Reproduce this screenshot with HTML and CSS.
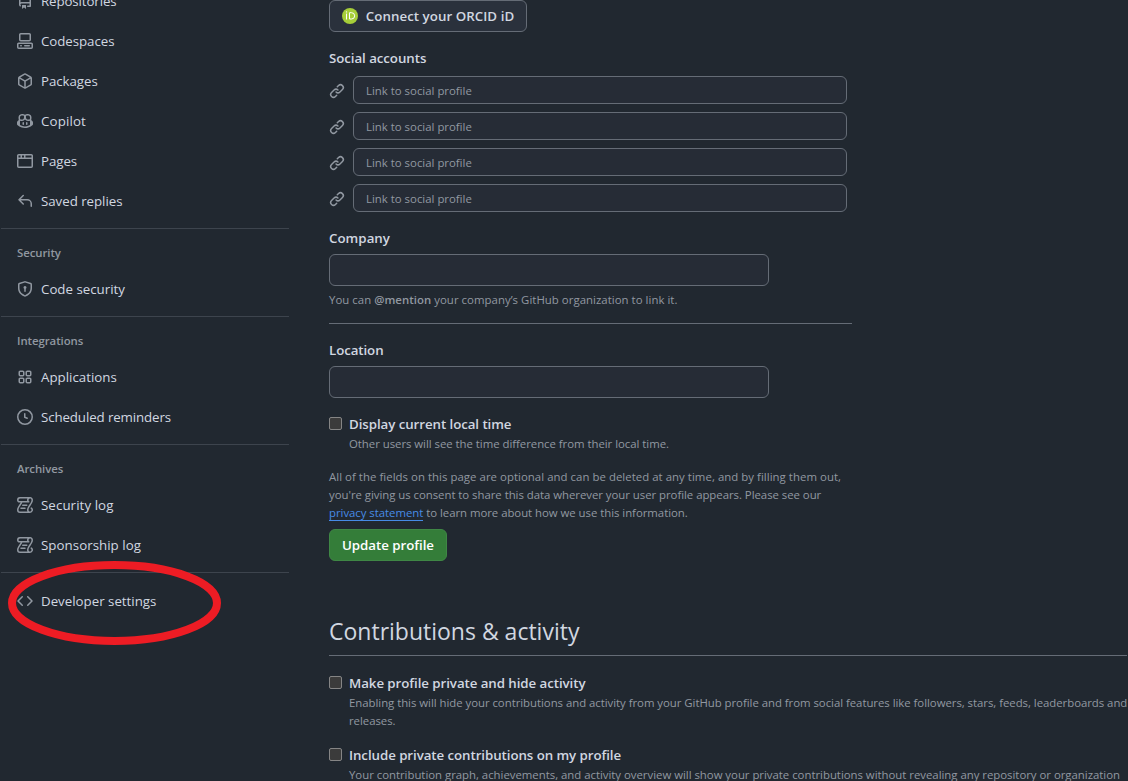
FILE: index.html
```html
<!DOCTYPE html>
<html lang="en">
<head>
<meta charset="utf-8">
<title>Your profile</title>
<link rel="stylesheet" href="styles.css">
</head>
<body>
<svg class="sprite" aria-hidden="true">
  <symbol id="log" viewBox="0 0 16 16"><path d="M5 8.25a.75.75 0 0 1 .75-.75h4a.75.75 0 0 1 0 1.5h-4A.75.75 0 0 1 5 8.25ZM4 10.5A.75.75 0 0 0 4 12h4a.75.75 0 0 0 0-1.5H4Z"/><path d="M13-.005c1.654 0 3 1.328 3 3 0 .982-.338 1.933-.783 2.818-.443.879-1.028 1.758-1.582 2.588l-.011.017c-.568.853-1.104 1.659-1.501 2.446-.398.789-.623 1.494-.623 2.136a1.500 1.500 0 1 0 2.333-1.248.75.75 0 0 1 .834-1.246A3 3 0 0 1 13 16H3a3 3 0 0 1-3-3c0-1.582.891-3.135 1.777-4.506.209-.322.418-.637.623-.946.473-.709.923-1.386 1.287-2.048H2.510c-.576 0-1.381-.133-1.907-.783A2.680 2.680 0 0 1 0 2.995a3 3 0 0 1 3-3Zm0 1.500a1.500 1.500 0 0 0-1.500 1.500c0 .476.223.834.667 1.132A.75.75 0 0 1 11.750 5.500H5.368c-.467 1.003-1.141 2.015-1.773 2.963-.192.289-.381.571-.558.845C2.130 10.711 1.500 11.916 1.500 13A1.500 1.500 0 0 0 3 14.500h7.401A2.989 2.989 0 0 1 10 13c0-.979.338-1.928.784-2.812.441-.874 1.023-1.748 1.575-2.576l.017-.026c.568-.853 1.103-1.658 1.501-2.448.398-.79.623-1.497.623-2.143 0-.838-.669-1.500-1.500-1.500Zm-10 0a1.500 1.500 0 0 0-1.500 1.500c0 .321.100.569.270.778.097.120.325.227.740.227h7.674A2.737 2.737 0 0 1 10 2.995c0-.546.146-1.059.401-1.500Z"/></symbol>
  <symbol id="link" viewBox="0 0 16 16"><path d="m7.775 3.275 1.250-1.250a3.500 3.500 0 1 1 4.950 4.950l-2.500 2.500a3.500 3.500 0 0 1-4.950 0 .751.751 0 0 1 .018-1.042.751.751 0 0 1 1.042-.018 1.998 1.998 0 0 0 2.830 0l2.500-2.500a2.002 2.002 0 0 0-2.830-2.830l-1.250 1.250a.751.751 0 0 1-1.042-.018.751.751 0 0 1-.018-1.042Zm-4.690 9.640a1.998 1.998 0 0 0 2.830 0l1.250-1.250a.751.751 0 0 1 1.042.018.751.751 0 0 1 .018 1.042l-1.250 1.250a3.500 3.500 0 1 1-4.950-4.950l2.500-2.500a3.500 3.500 0 0 1 4.950 0 .751.751 0 0 1-.018 1.042.751.751 0 0 1-1.042.018 1.998 1.998 0 0 0-2.830 0l-2.500 2.500a1.998 1.998 0 0 0 0 2.830Z"/></symbol>
</svg>
<div class="page">
  <nav class="sidebar">
    <ul class="nav-group">
      <li class="nav-item"><svg class="icon" viewBox="0 0 16 16"><path d="M2 2.500A2.500 2.500 0 0 1 4.500 0h8.750a.75.75 0 0 1 .75.75v12.500a.75.75 0 0 1-.75.75h-2.500a.75.75 0 0 1 0-1.500h1.750v-2h-8a1 1 0 0 0-.714 1.700.75.75 0 1 1-1.072 1.050A2.495 2.495 0 0 1 2 11.500Zm10.500-1h-8a1 1 0 0 0-1 1v6.708A2.486 2.486 0 0 1 4.500 9h8ZM5 12.250a.250.250 0 0 1 .250-.250h3.500a.250.250 0 0 1 .250.250v3.250a.250.250 0 0 1-.400.200l-1.450-1.087a.249.249 0 0 0-.300 0L5.400 15.700a.250.250 0 0 1-.400-.200Z"/></svg><span class="w-repos">Repositories</span></li>
      <li class="nav-item"><svg class="icon" viewBox="0 0 16 16"><path d="M0 11.250c0-.966.784-1.750 1.750-1.750h12.500c.966 0 1.750.784 1.750 1.750v3A1.750 1.750 0 0 1 14.250 16H1.750A1.750 1.750 0 0 1 0 14.250Zm2-9.500C2 .784 2.784 0 3.750 0h8.500C13.216 0 14 .784 14 1.750v5a1.750 1.750 0 0 1-1.750 1.750h-8.500A1.750 1.750 0 0 1 2 6.750Zm1.750-.250a.250.250 0 0 0-.250.250v5c0 .138.112.250.250.250h8.500a.250.250 0 0 0 .250-.250v-5a.250.250 0 0 0-.250-.250Zm-2 9.500a.250.250 0 0 0-.250.250v3c0 .138.112.250.250.250h12.500a.250.250 0 0 0 .250-.250v-3a.250.250 0 0 0-.250-.250Z"/><path d="M7 12.750a.75.75 0 0 1 .75-.75h4.500a.75.75 0 0 1 0 1.500h-4.500a.75.75 0 0 1-.75-.75Zm-4 0a.75.75 0 0 1 .75-.75h.500a.75.75 0 0 1 0 1.500h-.500a.75.75 0 0 1-.75-.75Z"/></svg><span class="w-snug">Codespaces</span></li>
      <li class="nav-item"><svg class="icon" viewBox="0 0 16 16"><path d="m8.878.392 5.250 3.045c.540.314.872.890.872 1.514v6.098a1.750 1.750 0 0 1-.872 1.514l-5.250 3.045a1.750 1.750 0 0 1-1.756 0l-5.250-3.045A1.750 1.750 0 0 1 1 11.049V4.951c0-.624.332-1.201.872-1.514L7.122.392a1.750 1.750 0 0 1 1.756 0ZM7.875 1.690l-4.630 2.685L8 7.133l4.755-2.758-4.630-2.685a.248.248 0 0 0-.250 0ZM2.500 5.677v5.372c0 .090.047.171.125.216l4.625 2.683V8.432Zm6.250 8.271 4.625-2.683a.250.250 0 0 0 .125-.216V5.677L8.750 8.432Z"/></svg><span class="w-snug">Packages</span></li>
      <li class="nav-item"><svg class="icon" viewBox="0 0 16 16"><path d="M7.998 15.035c-4.562 0-7.873-2.914-7.998-3.749V9.338c.085-.628.677-1.686 1.588-2.065.013-.070.024-.143.036-.218.029-.183.060-.384.126-.612-.201-.508-.254-1.084-.254-1.656 0-.870.128-1.769.693-2.484.579-.733 1.494-1.124 2.724-1.261 1.206-.134 2.262.034 2.944.765.050.053.096.108.139.165.044-.057.094-.112.143-.165.682-.731 1.738-.899 2.944-.765 1.230.137 2.145.528 2.724 1.261.566.715.693 1.614.693 2.484 0 .572-.053 1.148-.254 1.656.066.228.098.429.126.612.012.076.024.148.037.218.924.385 1.522 1.471 1.591 2.095v1.872c0 .766-3.351 3.795-8.002 3.795Zm0-1.485c2.280 0 4.584-1.110 5.002-1.433V7.862l-.023-.116c-.490.210-1.075.291-1.727.291-1.146 0-2.059-.327-2.710-.991A3.222 3.222 0 0 1 8 6.303a3.240 3.240 0 0 1-.544.743c-.650.664-1.563.991-2.710.991-.652 0-1.236-.081-1.727-.291l-.023.116v4.255c.419.323 2.722 1.433 5.002 1.433ZM6.762 2.830c-.193-.206-.637-.413-1.682-.297-1.019.113-1.479.404-1.713.700-.247.312-.369.789-.369 1.554 0 .793.129 1.171.308 1.371.162.181.519.379 1.442.379.853 0 1.339-.235 1.638-.540.315-.322.527-.827.617-1.553.117-.935-.037-1.395-.241-1.614Zm4.155-.297c-1.044-.116-1.488.091-1.681.297-.204.219-.359.679-.242 1.614.091.726.303 1.231.618 1.553.299.305.784.540 1.638.540.922 0 1.280-.198 1.442-.379.179-.200.308-.578.308-1.371 0-.765-.123-1.242-.370-1.554-.233-.296-.693-.587-1.713-.700Z"/><path d="M6.250 9.037a.75.75 0 0 1 .75.75v1.501a.75.75 0 0 1-1.500 0V9.787a.75.75 0 0 1 .75-.75Zm4.250.75v1.501a.75.75 0 0 1-1.500 0V9.787a.75.75 0 0 1 1.500 0Z"/></svg><span class="w-loose">Copilot</span></li>
      <li class="nav-item"><svg class="icon" viewBox="0 0 16 16"><path d="M0 2.750C0 1.784.784 1 1.750 1h12.500c.966 0 1.750.784 1.750 1.750v10.500A1.750 1.750 0 0 1 14.250 15H1.750A1.750 1.750 0 0 1 0 13.250ZM14.500 6h-13v7.250c0 .138.112.250.250.250h12.500a.250.250 0 0 0 .250-.250Zm-6-3.500v2h6V2.750a.250.250 0 0 0-.250-.250ZM5 2.500v2h2v-2Zm-3.250 0a.250.250 0 0 0-.250.250V4.500h2v-2Z"/></svg><span class="w-snug">Pages</span></li>
      <li class="nav-item"><svg class="icon" viewBox="0 0 16 16"><path d="M6.780 1.970a.75.75 0 0 1 0 1.060L3.810 6h6.440A4.750 4.750 0 0 1 15 10.750v2.500a.75.75 0 0 1-1.500 0v-2.500a3.250 3.250 0 0 0-3.250-3.250H3.810l2.970 2.970a.749.749 0 0 1-.326 1.275.749.749 0 0 1-.734-.215L1.470 7.280a.75.75 0 0 1 0-1.060l4.250-4.250a.75.75 0 0 1 1.060 0Z"/></svg><span class="w-saved">Saved replies</span></li>
    </ul>
    <h3 class="nav-heading"><span>Security</span></h3>
    <ul class="nav-group">
      <li class="nav-item"><svg class="icon" viewBox="0 0 16 16"><path d="m8.533.133 5.250 1.680A1.750 1.750 0 0 1 15 3.480V7c0 1.566-.320 3.182-1.303 4.682-.983 1.498-2.585 2.813-5.032 3.855a1.697 1.697 0 0 1-1.330 0c-2.447-1.042-4.049-2.357-5.032-3.855C1.320 10.182 1 8.566 1 7V3.480a1.750 1.750 0 0 1 1.217-1.667l5.250-1.680a1.748 1.748 0 0 1 1.066 0Zm-.610 1.429.001.001-5.250 1.680a.251.251 0 0 0-.174.237V7c0 1.360.275 2.666 1.057 3.859.784 1.194 2.121 2.342 4.366 3.298a.196.196 0 0 0 .154 0c2.245-.957 3.582-2.103 4.366-3.297C13.225 9.666 13.500 8.358 13.500 7V3.480a.250.250 0 0 0-.174-.238l-5.250-1.680a.250.250 0 0 0-.153 0ZM9.500 6.500c0 .536-.286 1.032-.750 1.300v2.450a.75.75 0 0 1-1.500 0V7.800A1.500 1.500 0 1 1 9.500 6.500Z"/></svg><span>Code security</span></li>
    </ul>
    <h3 class="nav-heading"><span>Integrations</span></h3>
    <ul class="nav-group">
      <li class="nav-item"><svg class="icon" viewBox="0 0 16 16"><path d="M1.500 3.250c0-.966.784-1.750 1.750-1.750h2.500c.966 0 1.750.784 1.750 1.750v2.500A1.750 1.750 0 0 1 5.750 7.500h-2.500A1.750 1.750 0 0 1 1.500 5.750Zm7 0c0-.966.784-1.750 1.750-1.750h2.500c.966 0 1.750.784 1.750 1.750v2.500a1.750 1.750 0 0 1-1.750 1.750h-2.500A1.750 1.750 0 0 1 8.500 5.750Zm-7 7c0-.966.784-1.750 1.750-1.750h2.500c.966 0 1.750.784 1.750 1.750v2.500a1.750 1.750 0 0 1-1.750 1.750h-2.500a1.750 1.750 0 0 1-1.750-1.750Zm7 0c0-.966.784-1.750 1.750-1.750h2.500c.966 0 1.750.784 1.750 1.750v2.500a1.750 1.750 0 0 1-1.750 1.750h-2.500a1.750 1.750 0 0 1-1.750-1.750ZM3.250 3a.250.250 0 0 0-.250.250v2.500c0 .138.112.250.250.250h2.500A.250.250 0 0 0 6 5.750v-2.500A.250.250 0 0 0 5.750 3Zm7 0a.250.250 0 0 0-.250.250v2.500c0 .138.112.250.250.250h2.500a.250.250 0 0 0 .250-.250v-2.500a.250.250 0 0 0-.250-.250Zm-7 7a.250.250 0 0 0-.250.250v2.500c0 .138.112.250.250.250h2.500a.250.250 0 0 0 .250-.250v-2.500a.250.250 0 0 0-.250-.250Zm7 0a.250.250 0 0 0-.250.250v2.500c0 .138.112.250.250.250h2.500a.250.250 0 0 0 .250-.250v-2.500a.250.250 0 0 0-.250-.250Z"/></svg><span>Applications</span></li>
      <li class="nav-item"><svg class="icon" viewBox="0 0 16 16"><path d="M8 0a8 8 0 1 1 0 16A8 8 0 0 1 8 0ZM1.500 8a6.500 6.500 0 1 0 13 0 6.500 6.500 0 0 0-13 0Zm7-3.250v2.992l2.028.812a.75.75 0 0 1-.557 1.392l-2.500-1A.751.751 0 0 1 7 8.250v-3.500a.75.75 0 0 1 1.500 0Z"/></svg><span class="w-repos">Scheduled reminders</span></li>
    </ul>
    <h3 class="nav-heading"><span>Archives</span></h3>
    <ul class="nav-group">
      <li class="nav-item"><svg class="icon"><use href="#log"/></svg><span class="w-log">Security log</span></li>
      <li class="nav-item"><svg class="icon"><use href="#log"/></svg><span class="w-sponsor">Sponsorship log</span></li>
    </ul>
    <ul class="nav-group nav-last">
      <li class="nav-item"><svg class="icon" viewBox="0 0 16 16"><path d="m11.280 3.220 4.250 4.250a.75.75 0 0 1 0 1.060l-4.250 4.250a.749.749 0 0 1-1.275-.326.749.749 0 0 1 .215-.734L13.940 8l-3.720-3.720a.749.749 0 0 1 .326-1.275.749.749 0 0 1 .734.215Zm-6.560 0a.751.751 0 0 1 1.042.018.751.751 0 0 1 .018 1.042L2.060 8l3.720 3.720a.749.749 0 0 1-.326 1.275.749.749 0 0 1-.734-.215L.470 8.530a.75.75 0 0 1 0-1.060Z"/></svg><span>Developer settings</span></li>
    </ul>
  </nav>

  <main class="content">
    <button class="btn btn-orcid" type="button"><svg class="orcid" viewBox="0 0 16 16"><circle cx="8" cy="8" r="8" fill="#a6ce39"/><g fill="none" stroke="#fff" stroke-width="1"><path d="M4.500 5.600v5.900M7.500 4.700v6.300h2a3.100 3.100 0 0 0 0-6.300Z"/></g><circle cx="4.500" cy="3.900" r=".7" fill="#fff"/></svg><span>Connect your ORCID iD</span></button>

    <section class="social">
      <h4 class="label">Social accounts</h4>
      <div class="social-row"><svg class="icon"><use href="#link"/></svg><div class="input input-sm">Link to social profile</div></div>
      <div class="social-row"><svg class="icon"><use href="#link"/></svg><div class="input input-sm">Link to social profile</div></div>
      <div class="social-row"><svg class="icon"><use href="#link"/></svg><div class="input input-sm">Link to social profile</div></div>
      <div class="social-row"><svg class="icon"><use href="#link"/></svg><div class="input input-sm">Link to social profile</div></div>
    </section>

    <section class="company">
      <h4 class="label w-company">Company</h4>
      <div class="input"></div>
      <p class="note w-mention">You can <strong>@mention</strong> your company’s GitHub organization to link it.</p>
    </section>

    <section class="location">
      <h4 class="label w-location">Location</h4>
      <div class="input"></div>
    </section>

    <div class="check">
      <span class="box"></span>
      <div><div class="label">Display current local time</div>
      <p class="note">Other users will see the time difference from their local time.</p></div>
    </div>

    <p class="note legal"><span class="w-open">All of the fields on this page are optional and can be deleted at any time, and by filling them out,</span><br>you're giving us consent to share this data wherever your user profile appears. Please see our<br><a class="link">privacy statement</a> to learn more about how we use this information.</p>

    <button class="btn btn-primary" type="button">Update profile</button>

    <h2 class="title">Contributions &amp; activity</h2>

    <div class="check check-wide">
      <span class="box"></span>
      <div><div class="label">Make profile private and hide activity</div>
      <p class="note">Enabling this will hide your contributions and activity from your GitHub profile and from social features like followers, stars, feeds, leaderboards and<br>releases.</p></div>
    </div>
    <div class="check check-wide">
      <span class="box"></span>
      <div><div class="label">Include private contributions on my profile</div>
      <p class="note w-graph">Your contribution graph, achievements, and activity overview will show your private contributions without revealing any repository or organization</p></div>
    </div>
  </main>
  <svg class="marker" viewBox="0 0 213 84"><ellipse cx="106.500" cy="42" rx="102.500" ry="38"/></svg>
</div>
</body>
</html>
```
FILE: styles.css
```css
* { box-sizing: border-box; }

body {
  margin: 0;
  background: #212830;
  color: #d1d7e0;
  font-family: "Open Sans", "Noto Sans", sans-serif;
  font-size: 13.3px;
}

h2, h3, h4, p, ul { margin: 0; padding: 0; }
.sprite { display: none; }

.page {
  position: relative;
  display: flex;
  height: 781px;
  overflow: hidden;
}

/* Sidebar */
.sidebar {
  flex: none;
  width: 288px;
  margin: -19px 40px 0 1px;
}
.nav-group { list-style: none; padding-bottom: 7px; }
.nav-item {
  display: flex;
  align-items: center;
  gap: 8px;
  height: 40px;
  padding-left: 16px;
  white-space: nowrap;
}
.icon { flex: none; width: 16px; height: 16px; fill: #9198a1; }
.nav-heading {
  display: flex;
  align-items: center;
  height: 41px;
  padding: 8px 16px 0;
  border-top: 1px solid #3d444d;
  color: #9198a1;
  font-size: 11.4px;
  font-weight: 600;
  line-height: 18px;
  letter-spacing: -.07px;
}
.nav-last { border-top: 1px solid #3d444d; padding-top: 8px; }

/* Main column */
.content {
  flex: none;
  display: flex;
  flex-direction: column;
  align-items: flex-start;
  width: 798px;
  white-space: nowrap;
}
.content > * { flex-shrink: 0; }
.btn {
  display: flex;
  align-items: center;
  justify-content: center;
  gap: 8px;
  height: 32px;
  padding: 0;
  border: 1px solid #656c76;
  border-radius: 6px;
  background: #2a313c;
  color: #d1d7e0;
  font: 600 13.3px "Open Sans", "Noto Sans", sans-serif;
}
.btn-orcid { width: 198px; letter-spacing: .05px; }
.orcid { flex: none; width: 16px; height: 16px; }

.label {
  font-size: 13.3px;
  font-weight: 600;
  line-height: 21px;
  letter-spacing: -.066px;
}
.note {
  color: #9198a1;
  font-size: 11.4px;
  line-height: 18px;
  letter-spacing: -.038px;
}
.note strong { font-weight: 600; }
.input {
  width: 440px;
  height: 32px;
  border: 1px solid #656c76;
  border-radius: 6px;
  background: #262c36;
}

.social { margin-top: 16px; }
.social .label { margin-bottom: 7px; }
.social-row { display: flex; align-items: center; gap: 8px; margin-bottom: 8px; }
.social-row .icon { margin-top: 2px; }
.input-sm {
  width: 494px;
  height: 28px;
  padding-left: 12px;
  color: #9198a1;
  font-size: 11.4px;
  line-height: 27px;
}

.company {
  width: 523px;
  margin-top: 8px;
  padding-bottom: 14px;
  border-bottom: 1px solid #656c76;
}
.company .label, .location .label { margin-bottom: 5px; }
.company .note { margin-top: 5px; }
.location { margin: 16px 0; }

.check { display: flex; gap: 7px; margin-bottom: 15px; }
.box {
  flex: none;
  width: 13px;
  height: 13px;
  margin-top: 3px;
  border: 1px solid #858585;
  border-radius: 2px;
  background: #3b3b3b;
}
.link { color: #478be6; border-bottom: 1px solid #478be6; }
.legal { margin-bottom: 7px; }
.btn-primary {
  width: 118px;
  border-color: #3f8745;
  background: #347d39;
  color: #fff;
  letter-spacing: -.04px;
}
.title {
  width: 100%;
  height: 40px;
  margin: 55px 0 17px;
  border-bottom: 1px solid #656c76;
  font-size: 23px;
  font-weight: 400;
  line-height: 30px;
}

/* Tracking adjustments */
.w-repos { letter-spacing: -.11px; }
.w-snug { letter-spacing: -.06px; }
.w-loose { letter-spacing: .14px; }
.w-saved { letter-spacing: -.033px; }
.w-log { letter-spacing: .083px; }
.w-sponsor { letter-spacing: .042px; }
.w-open { letter-spacing: .041px; }
.w-mention { letter-spacing: .035px; }
.w-company { letter-spacing: .03px; }
.w-location { letter-spacing: -.086px; }
.w-graph { letter-spacing: -.022px; }

/* Highlight drawn over the sidebar */
.marker {
  position: absolute;
  left: 8px;
  top: 561px;
  width: 213px;
  height: 84px;
  fill: none;
  stroke: #ed1c24;
  stroke-width: 8px;
}
```
